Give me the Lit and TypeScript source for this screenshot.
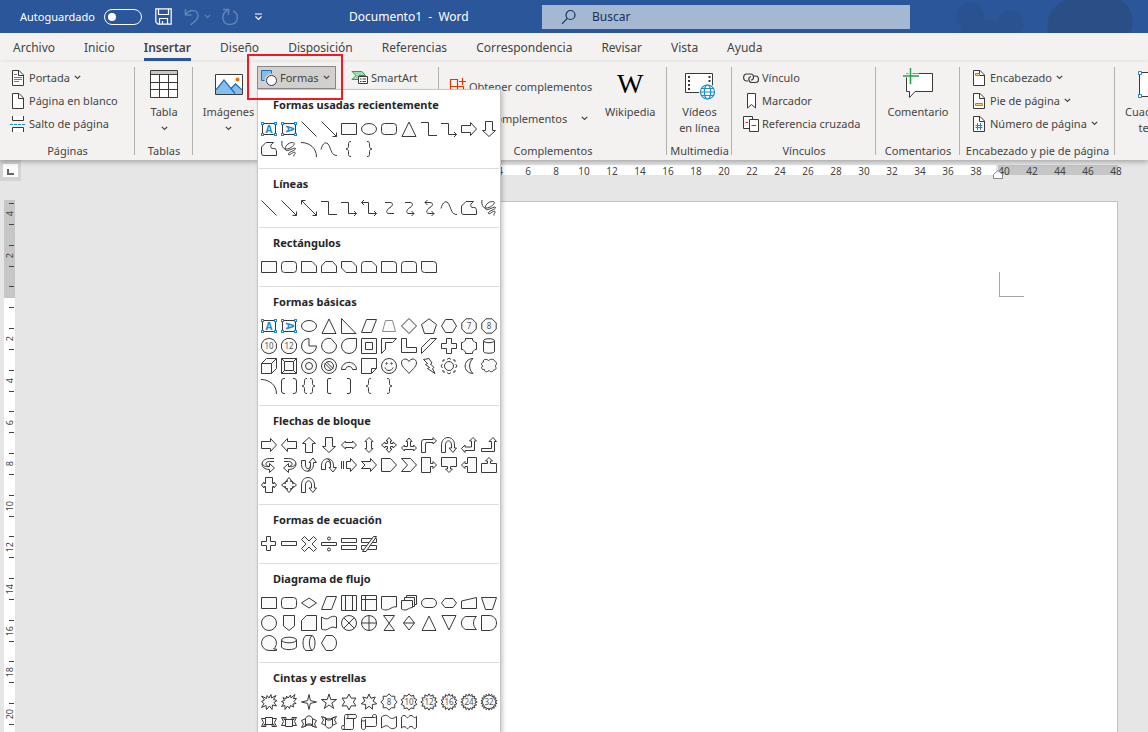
import { LitElement, html, svg, css, nothing } from "lit";
import type { SVGTemplateResult, TemplateResult } from "lit";
import { customElement, property } from "lit/decorators.js";

type Art = SVGTemplateResult;

/* ---------- geometry helpers, all on a 16 x 16 grid ---------- */

const p = (d: string): Art => svg`<path d=${d}></path>`;
const open = (d: string): Art => svg`<path d=${d} fill="none"></path>`;
const turn = (deg: number, art: Art): Art =>
  svg`<g transform=${`rotate(${deg} 8 8)`}>${art}</g>`;
const mirror = (art: Art): Art =>
  svg`<g transform="translate(16 0) scale(-1 1)">${art}</g>`;
const flip = (art: Art): Art =>
  svg`<g transform="translate(0 16) scale(1 -1)">${art}</g>`;

const ring = (n: number, r: number, inner = 0, start = -90): string => {
  const count = inner ? n * 2 : n;
  const pts: string[] = [];
  for (let i = 0; i < count; i++) {
    const a = ((start + (360 / count) * i) * Math.PI) / 180;
    const q = inner && i % 2 ? inner : r;
    pts.push(`${(8 + q * Math.cos(a)).toFixed(2)} ${(8 + q * Math.sin(a)).toFixed(2)}`);
  }
  return `M${pts.join("L")}z`;
};

const digits = (label: string): Art =>
  svg`<text class="num" x="8" y="11" text-anchor="middle">${label}</text>`;
const polygonNo = (n: number, label: string, start = -90): Art =>
  svg`${p(ring(n, 7.8, 0, start))}${digits(label)}`;
const starNo = (n: number, label: string, inner: number): Art =>
  svg`${p(ring(n, 8.2, inner))}${digits(label)}`;
const circle = (r: number): Art => svg`<circle cx="8" cy="8" r=${r}></circle>`;

/* ---------- shapes ---------- */

const corner = (x: number, y: number): Art =>
  svg`<rect class="handle" x=${x} y=${y} width="2" height="2"></rect>`;
const boxFrame = svg`${p("M1.5 2.5H14.5V13.5H1.5z")}${corner(0.5, 1.5)}${corner(13.5, 1.5)}${corner(0.5, 12.5)}${corner(13.5, 12.5)}`;
const letterA = svg`<text class="letter" x="8" y="11.5" text-anchor="middle">A</text>`;
const textBox = svg`${boxFrame}${letterA}`;
const textBoxV = svg`${boxFrame}${turn(90, letterA)}`;

const rect = p("M.5 2.5H15.5V13.5H.5z");
const roundRect = svg`<rect x=".5" y="2.5" width="15" height="11" rx="3"></rect>`;
const ellipse = svg`<ellipse cx="8" cy="8" rx="7.5" ry="5.5"></ellipse>`;
const triangle = p("M8 1L15 15.5H1z");
const line = open("M.5 .5L15.5 15.5");
const lineArrow = open("M.5 .5L15.5 15.5M15.5 11.5V15.5H11.5");
const lineBoth = open("M.5 .5L15.5 15.5M15.5 11.5V15.5H11.5M.5 4.5V.5H4.5");
const elbow = open("M0 1.5H7.5V14.5H16");
const elbowArrow = open("M0 2.5H7.5V13.5H15.5M13 11L15.5 13.5L13 16");
const elbowBoth = open("M.5 2.5H7.5V13.5H15.5M13 11L15.5 13.5L13 16M3 0L.5 2.5L3 5");
const curved = open("M4 2.5H9C12.5 2.5 12 6 9 7.5S4 13.5 8 13.5H13");
const curvedArrow = open("M4 2.5H9C12.5 2.5 12 6 9 7.5S4 13.5 8 13.5H13M10.5 11L13 13.5L10.5 16");
const curvedBoth = open("M4 2.5H9C12.5 2.5 12 6 9 7.5S4 13.5 8 13.5H13M10.5 11L13 13.5L10.5 16M6.5 0L4 2.5L6.5 5");
const freeform = p("M5 1.5H12.5C8.5 4 9 8 12.5 7.5C15 7 15.5 9 15.5 11V14.5H3C1 14.5.5 13.5.5 12V6z");
const scribble = open("M1 0C0 6 3 9.500 8 7.500C13 5.500 15 1.500 11.500 1.500C7 1.500 3 6 4.500 9C6 11.500 14 5.500 14.500 7.500C15 9.500 6.500 11 7.500 13.500C8.500 15 12.500 10 14 11.500C15 13 12 13.500 13 15.500");
const arc = open("M0 1.500C8.500 1.500 15.500 7 15.500 16");
const curve = open("M0 8.500C1.500 2 5.500 -.5 8 4.500S10.500 14.500 16 14.500");
const braceL = open("M10 .5C7.500 .5 7.500 1.500 7.500 4S7.500 7.500 5 8C7.500 8.500 7.500 9.500 7.500 12S7.500 15.500 10 15.500");
const braceR = mirror(braceL);

const arrowR = p("M.5 4.500H9.500V1.500L15.500 8L9.500 14.500V11.500H.5z");
const arrowL = turn(180, arrowR);
const arrowU = turn(-90, arrowR);
const arrowD = turn(90, arrowR);
const arrowLR = p("M.5 8L4.500 4V5.500H11.500V4L15.500 8L11.500 12V10.500H4.500V12z");

const cross = p("M5.500 .5H10.500V5.500H15.500V10.500H10.500V15.500H5.500V10.500H.5V5.500H5.500z");

const recent: Art[] = [
  textBox, textBoxV, line, lineArrow, rect, ellipse, roundRect, triangle, elbow, elbowArrow, arrowR, arrowD,
  freeform, scribble, arc, curve, braceL, braceR,
];

const lines: Art[] = [
  line, lineArrow, lineBoth, elbow, elbowArrow, elbowBoth, curved, curvedArrow, curvedBoth, curve, freeform, scribble,
];

const rects: Art[] = [
  rect,
  roundRect,
  p("M.5 2.500H11L15.500 7V13.500H.5z"),
  p("M4.500 2.500H11.500L15.500 7V13.500H.5V7z"),
  p("M.5 2.500H11L15.500 7V13.500H5L.5 9z"),
  p("M3.500 2.500H11L15.500 7V13.500H.5V5.500Q.5 2.500 3.500 2.500z"),
  p("M.5 2.500H12.500Q15.500 2.500 15.500 5.500V13.500H.5z"),
  p("M3.500 2.500H12.500Q15.500 2.500 15.500 5.500V13.500H.5V5.500Q.5 2.500 3.500 2.500z"),
  p("M.5 2.500H12.500Q15.500 2.500 15.500 5.500V13.500H3.500Q.5 13.500 .5 10.500z"),
];

const bracketL = open("M10 .5H8Q6.500 .5 6.500 2V14Q6.500 15.500 8 15.500H10");

const basic: Art[] = [
  textBox,
  textBoxV,
  ellipse,
  triangle,
  p("M.5 .5V15.500H15z"),
  p("M5.500 1.500H15.500L10.500 14.500H.5z"),
  svg`<g class="dim">${p("M4.500 2.500H11.500L14.500 13.500H1.500z")}</g>`,
  p("M8 .5L15.500 8L8 15.500L.5 8z"),
  p("M8 .8L15.500 6.500L12.500 15.500H3.500L.5 6.500z"),
  p("M4.500 1.500H11.500L15.500 8L11.500 14.500H4.500L.5 8z"),
  polygonNo(8, "7", -67.5),
  polygonNo(8, "8", -67.5),
  polygonNo(10, "10"),
  polygonNo(12, "12", -75),
  p("M8 .5V8H15.500A7.500 7.500 0 1 1 8 .5z"),
  p("M10 .5L15.500 7A7.500 7.500 0 1 1 10 .5z"),
  p("M15.500 .5H8A7.500 7.500 0 1 0 15.500 8z"),
  svg`${p("M.5 .5H15.500V15.500H.5z")}${p("M4.500 4.500H11.500V11.500H4.500z")}`,
  p("M.5 .5H15.500L11.500 4.500H4.500V11.500L.5 15.500z"),
  p("M.5 .5H5.500V9.500H15.500V14.500H.5z"),
  p("M9.500 .5H15.500L.5 15.500V9.500z"),
  cross,
  p("M4.500 .5H11.500V2L14 4.500H15.500V11.500H14L11.500 14V15.500H4.500V14L2 11.500H.5V4.500H2L4.500 2z"),
  svg`${p("M2.500 3V13.500C3 15.800 13 15.800 13.500 13.500V3")}<ellipse cx="8" cy="2.700" rx="5.500" ry="2"></ellipse>`,
  svg`${p("M.5 5.500L5.500 .5H15.500V10.500L10.500 15.500H.5z")}${open("M.5 5.500H10.500V15.500M10.500 5.500L15.500 .5")}`,
  svg`${p("M.5 .5H15.500V15.500H.5z")}${p("M3.500 3.500H12.500V12.500H3.500z")}${open("M.5 .5L3.500 3.500M15.500 .5L12.500 3.500M.5 15.500L3.500 12.500M15.500 15.500L12.500 12.500")}`,
  svg`${circle(7.5)}${circle(3.5)}`,
  svg`${circle(7.5)}${circle(4.5)}${open("M4 5.500L10.500 12M5.500 4L12 10.500")}`,
  p("M.5 11.500C1 2 15 2 15.500 11.500H11.500C11 7.500 5 7.500 4.500 11.500z"),
  svg`${p("M.5 .5H15.500V10.500L10.500 15.500H.5z")}${open("M10.500 15.500V10.500H15.500")}`,
  svg`${circle(7.5)}${open("M4 9.500C5 13.500 11 13.500 12 9.500")}<circle cx="5.500" cy="5.500" r=".7"></circle><circle cx="10.500" cy="5.500" r=".7"></circle>`,
  p("M8 3.500C9.500 0 15.500 0 15.500 5C15.500 9 10 12.500 8 15.500C6 12.500 .5 9 .5 5C.5 0 6.500 0 8 3.500z"),
  p("M2.500 1.500L8 .5L11 5L9.500 6L13 9.500L11.500 10.500L14 15.500L6.500 10.500L8.500 9.500L4.500 6.500L6.500 5.500z"),
  svg`${circle(4.5)}${open("M6 1.500L8 0L10 1.500M6 14.500L8 16L10 14.500M1.500 6L0 8L1.500 10M14.500 6L16 8L14.500 10M2 4V2H4M12 2H14V4M2 12V14H4M12 14H14V12")}`,
  p("M12 .5C1.500 1 1.500 15 12 15.500C7.500 12 7.500 4 12 .5z"),
  p("M2.500 4C1.500 1 5.500 .5 7.500 2.500C9.500 .5 13.500 1 13.500 3C16 3.500 16 7 14 8C16 10 15 12 12.500 12C12 14.500 9 14 8 12.500C6 14.500 3 14 3.500 11.500C.5 12 -.5 9 2 8C-.5 7 .5 4 2.500 4z"),
  arc,
  open("M4 .5H3Q.5 .5 .5 3V13Q.5 15.500 3 15.500H4M12 .5H13Q15.500 .5 15.500 3V13Q15.500 15.500 13 15.500H12"),
  svg`<g transform="translate(-4 0)">${braceL}</g><g transform="translate(3 0)">${braceR}</g>`,
  bracketL,
  mirror(bracketL),
  braceL,
  braceR,
];

const bentUp = p("M.5 11.500H10.500V4.500H8L12 .5L15.500 4.500H13.500V14.500H.5z");
const swoosh = svg`${p("M13 1.500H8.500C-1.500 1.500 -1.500 12.500 8.500 12.500V15.500L13.500 11L8.500 6.500V9.500C4 9.500 3.500 4.500 8.500 4.500H13")}${open("M1.500 6.500C2 9 4 10 8.500 9.500")}`;
const uTurn = p("M.5 15.500V8C.5 -2 13.500 -2 13.500 8V11H15.500L12 15.500L8 11H10.500V8C10.500 2.500 4.500 2.500 4.500 8V15.500z");
const arch = svg`${p("M.5 12.500V8.500C.5 -.5 12.500 -.5 12.500 8.500V10.500H15.500L12 15L8 10.500H9.500V8C9.500 3 4.500 3 4.500 8V12.500z")}${open("M6.500 2C9 2.500 9.500 5 9.500 8.500")}`;
const callout = p("M.5 .5H9.500V6.500H12V4.500L15.500 8L12 11.500V9.500H9.500V15.500H.5z");

const blockArrows: Art[] = [
  arrowR,
  arrowL,
  arrowU,
  arrowD,
  arrowLR,
  turn(90, arrowLR),
  p("M8 .5L11 4H9.500V6.500H12V5L15.500 8L12 11V9.500H9.500V12H11L8 15.500L5 12H6.500V9.500H4V11L.5 8L4 5V6.500H6.500V4H5z"),
  p("M8 1L11 4.500H9.500V9.500H12.500V8L15.500 11L12.500 14V12.500H3.500V14L.5 11L3.500 8V9.500H6.500V4.500H5z"),
  p("M.5 15.500V5Q.5 2.500 3 2.500H12V.5L15.500 4L12 7V5.500H6Q4.500 5.500 4.500 7V15.500z"),
  uTurn,
  p("M.5 11.500L4 8V10H10.500V4H8.500L12 .5L15.500 4H13.500V13.500H4V15.500z"),
  bentUp,
  swoosh,
  mirror(swoosh),
  flip(arch),
  arch,
  svg`${p("M5.500 4.500H9.500V1.500L15.500 8L9.500 14.500V11.500H5.500z")}${open("M.5 4V12M2.500 4V12")}`,
  p("M.5 4.500H9.500V1.500L15.500 8L9.500 14.500V11.500H.5L4 8z"),
  p("M.5 1.500H9.500L15.500 8L9.500 14.500H.5z"),
  p("M.5 1.500H9.500L15.500 8L9.500 14.500H.5L6.500 8z"),
  callout,
  turn(90, callout),
  turn(180, callout),
  turn(-90, callout),
  p("M4.500 .5H11.500V6.500H13V5L15.500 8L13 11V9.500H11.500V15.500H4.500V9.500H3V11L.5 8L3 5V6.500H4.500z"),
  p("M8 .5L10.500 3.500H9.500V4.500H11.500V6.500H12.500V5.500L15.500 8L12.500 10.500V9.500H11.500V11.500H9.500V12.500H10.500L8 15.500L5.500 12.500H6.500V11.500H4.500V9.500H3.500V10.500L.5 8L3.500 5.500V6.500H4.500V4.500H6.500V3.500H5.500z"),
  uTurn,
];

const twoBars = p("M.5 2.500H15.500V6.500H.5zM.5 9.500H15.500V13.500H.5z");

const equation: Art[] = [
  p("M5.500 .5H9.500V5.500H14.500V9.500H9.500V14.500H5.500V9.500H.5V5.500H5.500z"),
  p("M.5 5.500H15.500V9.500H.5z"),
  p("M3.500 .5L8 5L12.500 .5L15.500 3.500L11 8L15.500 12.500L12.500 15.500L8 11L3.500 15.500L.5 12.500L5 8L.5 3.500z"),
  svg`${p("M.5 6.500H15.500V9.500H.5z")}<circle cx="8" cy="2.500" r="1.500"></circle><circle cx="8" cy="13.500" r="1.500"></circle>`,
  twoBars,
  svg`${twoBars}${p("M12.500 .5H15.500L5 15.500H1.500z")}`,
];

const flow: Art[] = [
  rect,
  roundRect,
  p("M8 3L15.500 8L8 13L.5 8z"),
  p("M5.500 1.500H15.500L10.500 14.500H.5z"),
  svg`${p("M.5 .5H15.500V15.500H.5z")}${open("M4.500 .5V15.500M11.500 .5V15.500")}`,
  svg`${p("M.5 .5H15.500V15.500H.5z")}${open("M4.500 .5V15.500M.5 4.500H15.500")}`,
  p("M.5 1.500H15.500V12C11 11 9 15 5 15C3 15 1.500 14.500 .5 13.500z"),
  svg`${p("M5.500 .5H15.500V9.500H5.500z")}${p("M3.500 2.500H13.500V11.500H3.500z")}${p("M.5 5.500H11.500V12.500C8 12.500 7 15 4 15C2 15 1.500 14.500 .5 14z")}`,
  svg`<rect x=".5" y="3.500" width="15" height="9" rx="4.500"></rect>`,
  p("M4 3.500H12L15.500 8L12 12.500H4L.5 8z"),
  p("M.5 6L15.500 2.500V13.500H.5z"),
  p("M.5 2.500H15.500L11.500 14.500H4.500z"),
  circle(7.5),
  p("M2.500 .5H13.500V11L8 15.500L2.500 11z"),
  p("M.5 5.500L5.500 .5H15.500V15.500H.5z"),
  p("M.5 2C4 4 6 4.500 8 3S13 .5 15.500 2V13C12 11.500 10 12 8 13.500S3 15.500 .5 14z"),
  svg`${circle(7.5)}${open("M2.700 2.700L13.300 13.300M13.300 2.700L2.700 13.300")}`,
  svg`${circle(7.5)}${open("M8 .5V15.500M.5 8H15.500")}`,
  p("M2.500 .5H13.500L3 15.500H13.500z"),
  svg`${p("M8 1L13.500 8L8 15L2.500 8z")}${open("M2.500 8H13.500")}`,
  triangle,
  turn(180, triangle),
  p("M4.500 1.500H15.500C11.500 5 11.500 11 15.500 14.500H4.500C-1 12 -1 4 4.500 1.500z"),
  p("M.5 .5H8C18 .5 18 15.500 8 15.500H.5z"),
  svg`${p("M8 15.500A7.500 7.500 0 1 1 14 12.500L12.500 14H15.500V15.500z")}`,
  svg`${p("M.5 5V12C2 15.500 14 15.500 15.500 12V5")}<ellipse cx="8" cy="5" rx="7.500" ry="2.800"></ellipse>`,
  svg`${p("M5 .5H11C15 2 15 14 11 15.500H5C1 14 1 2 5 .5z")}${open("M11 .5C7.500 4 7.500 12 11 15.500")}`,
  p("M5 .5H11C17 3 17 13 11 15.500H5L.5 8z"),
];

const ribbon = svg`${p("M.5 4.500H5V12.500H.5L2.500 8.500zM15.500 4.500H11V12.500H15.500L13.500 8.500z")}${p("M4.500 3.500H11.500V10.500H4.500z")}${open("M3 12.500V10.500H13V12.500")}`;
const ribbonCurved = svg`${p("M.5 6.500L5 4.500V12L.5 13.500L2.500 10zM15.500 6.500L11 4.500V12L15.500 13.500L13.500 10z")}${p("M4.500 4.500C6 1 10 1 11.500 4.500V11C10 9.500 6 9.500 4.500 11z")}${open("M2.500 13C5 10.500 11 10.500 13.500 13")}`;
const scrollV = svg`${p("M3.500 2.500C3.500 .5 4.500 .5 5.500 .5H14C16 .5 16 4.500 14 4.500H12.500V13.500C12.500 15.500 11.500 15.500 10.500 15.500H2C0 15.500 0 11.500 2 11.500H3.500z")}${open("M5.500 .5C7.500 .5 7.500 4.500 5.500 4.500H12.500M2 11.500C4 11.500 4 15.500 2 15.500")}`;
const scrollH = svg`${p("M.5 5.500C.5 3.500 1.500 3.500 2.500 3.500H11.500V2C11.500 0 15.500 0 15.500 2V10.500C15.500 12.500 14.500 12.500 13.500 12.500H4.500V14C4.500 16 .5 16 .5 14z")}${open("M.5 5.500C.5 7.500 4.500 7.500 4.500 5.500V12.500M11.500 3.500H13.500C15.500 3.500 15.500 2.500 15.500 2")}`;

const banners: Art[] = [
  p("M8 4L10 .5L10.500 4L15 1.500L12.500 5.500L16 6.500L13 8.500L15.500 12L11.500 11L11 15.500L8.500 12L5.500 15.500L5 11.500L.5 13.500L3 9.500L.5 7.500L3.500 6L.5 2L5.500 4.500L6 1.500z"),
  p("M7 4L9.500 1L10 4L14 .5L12.500 4.500L15.500 4.500L13 7.500L15 9.500L12 10L12.500 13L9.500 11.500L8.500 14.500L6.500 12L4 15.500L4 11.500L.5 12.500L3 9L.5 7.500L3.500 6.500L2 3.500L5 5L5.500 2z"),
  p(ring(4, 7.5, 2)),
  p(ring(5, 8, 3)),
  p(ring(6, 8, 4.4)),
  p(ring(7, 8, 4.2)),
  starNo(8, "8", 6.2),
  starNo(10, "10", 6.2),
  starNo(12, "12", 6),
  starNo(14, "16", 6),
  starNo(16, "24", 6),
  starNo(18, "32", 6),
  ribbon,
  flip(ribbon),
  ribbonCurved,
  flip(ribbonCurved),
  scrollV,
  scrollH,
  p("M.5 3C4 .5 6 1 8 3S12 5 15.500 2.500V13C12 15.500 10 15 8 13S4 11.500 .5 14z"),
  p("M.5 3C2 1 4 1 5 2.500S7 4 8 2.500S11 1 12 2.500S14 4 15.500 2.500V13.500C14 15 13 15 12 13.500S9 12 8 13.500S6 15 5 13.500S2 12.500 .5 14z"),
];

interface Section {
  title: string;
  shapes: Art[];
}

const sections: Section[] = [
  { title: "Formas usadas recientemente", shapes: recent },
  { title: "Líneas", shapes: lines },
  { title: "Rectángulos", shapes: rects },
  { title: "Formas básicas", shapes: basic },
  { title: "Flechas de bloque", shapes: blockArrows },
  { title: "Formas de ecuación", shapes: equation },
  { title: "Diagrama de flujo", shapes: flow },
  { title: "Cintas y estrellas", shapes: banners },
];

/* ---------- gallery menu ---------- */

@customElement("shape-gallery")
export class ShapeGallery extends LitElement {
  static styles = css`
    :host {
      display: block;
      box-sizing: border-box;
      padding: 0 1px;
      background: #fff;
      border: 1px solid #c6c6c6;
      box-shadow: 2px 2px 4px rgba(0, 0, 0, 0.2);
    }
    section {
      padding-bottom: 9px;
      border-bottom: 1px solid #dcdcdc;
    }
    h2 {
      margin: 0;
      padding-left: 14px;
      font-size: 11px;
      font-weight: 700;
      line-height: 29px;
      color: #262626;
    }
    .grid {
      display: grid;
      grid-template-columns: repeat(12, 20px);
      grid-auto-rows: 20px;
    }
    button {
      display: grid;
      place-items: center;
      padding: 0;
      border: 0;
      background: none;
    }
    svg {
      display: block;
      width: 16px;
      height: 16px;
      overflow: visible;
      stroke: #3b3a39;
      stroke-width: 1;
      fill: #fafafa;
    }
    .dim {
      stroke: #8a8a8a;
    }
    .handle {
      stroke: #1e8bcd;
      fill: #fff;
    }
    .letter {
      font: 700 10px "Noto Sans", sans-serif;
      stroke: none;
      fill: #1e8bcd;
    }
    .num {
      font: 8px "Noto Sans", sans-serif;
      stroke: none;
      fill: #555;
    }
  `;

  render() {
    return sections.map(
      (s) => html`<section>
        <h2>${s.title}</h2>
        <div class="grid">
          ${s.shapes.map(
            (shape, i) => html`<button type="button" aria-label=${`${s.title} ${i + 1}`}>
              <svg viewBox="0 0 16 16" aria-hidden="true">${shape}</svg>
            </button>`,
          )}
        </div>
      </section>`,
    );
  }
}

/* ---------- ribbon icons ---------- */

const icon = (w: number, h: number, art: Art): TemplateResult =>
  html`<svg class="icon" width=${w} height=${h} viewBox=${`0 0 ${w} ${h}`} aria-hidden="true">${art}</svg>`;

const chevron = html`<svg class="chev" width="7" height="5" viewBox="0 0 7 5" aria-hidden="true">
  <path d="M.8 .8L3.500 3.500L6.200 .8" fill="none" stroke="currentColor" stroke-width="1.200"></path>
</svg>`;

const sheet = svg`<path d="M3.500 1.500H10L14.500 6V16.500H3.500z" fill="#fff" stroke="#3b3a39"></path><path d="M9.500 1.500V6.500H14.500" fill="none" stroke="#3b3a39"></path>`;

const icons = {
  cover: icon(18, 18, svg`${sheet}<path d="M5 5.500H8M5 8.500H13M5 10.500H13M5 12.500H10" stroke="#797775"></path>`),
  blank: icon(18, 18, sheet),
  pageBreak: icon(18, 18, svg`<path d="M3.500 1V5.500H14.500V1M3.500 17V12.500H14.500V17" fill="#fff" stroke="#3b3a39"></path><path d="M1 9.500H17" stroke="#1e8bcd" stroke-dasharray="3 1"></path>`),
  table: icon(32, 32, svg`<path d="M2.500 2.500H29.500V29.500H2.500z" fill="#fff" stroke="#3b3a39"></path><path d="M3 3H29V6H3z" fill="#c8c6c4"></path><path d="M2.500 6.500H29.500M2.500 14.500H29.500M2.500 21.500H29.500M11.500 6.500V29.500M20.500 6.500V29.500" stroke="#3b3a39"></path>`),
  images: icon(32, 32, svg`<path d="M2.500 6.500H29.500V26.500H2.500z" fill="#fff" stroke="#3b3a39"></path><path d="M3 23L11 13L22 26H3z M17 21L22.500 16.500L29 23V26H20z" fill="#83beec"></path><path d="M3 22L11 12L22 25.500M18 20.500L22.500 16L29 22" fill="none" stroke="#1e6fb8" stroke-width="1.300"></path><circle cx="24.500" cy="11.500" r="2" fill="#e8710a"></circle>`),
  shapes: icon(18, 18, svg`<path d="M1.500 1.500H11.500V11.500H1.500z" fill="#83beec" stroke="#1e6fb8"></path><circle cx="11.500" cy="11.500" r="7" fill="#d2d0ce" stroke="none"></circle><circle cx="11.500" cy="11.500" r="5" fill="#fff" stroke="#3b3a39"></circle>`),
  smart: icon(18, 18, svg`<path d="M1 2.500H11L14.500 6.500H8V10.500H1L5 6.500z" fill="#9fdbb0" stroke="#2e9e4f"></path><path d="M7.500 7.500H16.500V14.500H7.500z" fill="#fff" stroke="#3b3a39"></path><path d="M9 10H10.500M9 12.500H10.500M11.500 10H15M11.500 12.500H15" stroke="#3b3a39"></path>`),
  store: icon(18, 18, svg`<path d="M1.500 1.500H8.500V15.500H1.500zM1.500 8.500H14.500V15.500H1.500z M13.500 0V7M10 3.500H17" fill="none" stroke="#d83b01" stroke-width="1.200"></path>`),
  addin: icon(18, 18, svg`<path d="M2.500 5.500L9 2L15.500 5.500V12.500L9 16L2.500 12.500z" fill="#fff" stroke="#d83b01"></path>`),
  video: icon(32, 32, svg`<path d="M1.500 5.500H28.500V24.500H1.500z" fill="#fff" stroke="#3b3a39"></path><path d="M5 8V23M25.500 8V23" stroke="#3b3a39" stroke-width="2" stroke-dasharray="2 2"></path><circle cx="23.500" cy="24" r="8.500" fill="#f3f2f1"></circle><g fill="#fff" stroke="#1e8bcd" stroke-width="1.200"><circle cx="23.500" cy="24" r="7"></circle><ellipse cx="23.500" cy="24" rx="3.200" ry="7"></ellipse><path d="M16.500 24H30.500M17.500 20.500H29.500M17.500 27.500H29.500"></path></g>`),
  link: icon(18, 18, svg`<g fill="none" stroke="#3b3a39" stroke-width="1.200"><path d="M6 12H5C.5 12 .5 5 5 5H8.500C12.500 5 12.500 11 9 11"></path><path d="M12 7H13.500C17.500 7 17.500 13.500 13.500 13.500H10C6 13.500 6 8 9 7.500"></path></g>`),
  bookmark: icon(18, 18, svg`<path d="M5.500 1.500H13.500V16L9.500 12.500L5.500 16z" fill="#fff" stroke="#3b3a39"></path>`),
  crossRef: icon(18, 18, svg`<path d="M1.500 1.500H10.500V13.500H1.500z" fill="#fff" stroke="#3b3a39"></path><path d="M7.500 4.500H16.500V16.500H7.500z" fill="#fff" stroke="#3b3a39"></path><path d="M3.500 7.500H6M9.500 10.500H14" stroke="#e8112d"></path>`),
  comment: icon(32, 32, svg`<path d="M4.500 5.500H30.500V23.500H13L7.500 29.500V23.500H4.500z" fill="#fff" stroke="#3b3a39"></path><path d="M8.500 2V17M1 7.500H17" stroke="#f3f2f1" stroke-width="4"></path><path d="M8.500 0V16M1 8H17" stroke="#2e9e4f" stroke-width="1.500"></path>`),
  header: icon(18, 18, svg`${sheet}<path d="M5.500 4.500H9.500V6.500H5.500z" fill="#fbd38a" stroke="#e07000"></path>`),
  footer: icon(18, 18, svg`${sheet}<path d="M5.500 11.500H12.500V13.500H5.500z" fill="#fbd38a" stroke="#e07000"></path>`),
  pageNo: icon(18, 18, svg`${sheet}<path d="M7.500 8V15M10.500 8V15M5.500 10.500H12.500M5.500 12.500H12.500" stroke="#1e8bcd" fill="none"></path>`),
  textBox: icon(32, 32, svg`<path d="M3.500 4.500H31V28.500H3.500z" fill="#fff" stroke="#3b3a39"></path><path d="M2.500 3.500H5.500V6.500H2.500zM2.500 26.500H5.500V29.500H2.500z" fill="#fff" stroke="#1e8bcd"></path><path d="M13 23L18 10L23 23M15 19H21" fill="none" stroke="#1e8bcd" stroke-width="2"></path>`),
};

const tabs = ["Archivo", "Inicio", "Insertar", "Diseño", "Disposición", "Referencias", "Correspondencia", "Revisar", "Vista", "Ayuda"];
const horizontal = Array.from({ length: 25 }, (_, i) => i * 2);
const vertical = [4, 2, 0, 2, 4, 6, 8, 10, 12, 14, 16, 18, 20];

const small = (art: TemplateResult, label: string, drop = false) =>
  html`<button type="button" class="small">${art}<span>${label}</span>${drop ? chevron : nothing}</button>`;
const big = (art: TemplateResult, label: string, second: unknown = nothing) =>
  html`<button type="button" class="big">${art}<span>${label}</span><span class="second">${second}</span></button>`;

/* ---------- page ---------- */

@customElement("app-root")
export class AppRoot extends LitElement {
  @property() active = "Insertar";

  static styles = css`
    :host {
      display: flex;
      flex-direction: column;
      height: 100vh;
      overflow: hidden;
      position: relative;
      background: #e6e6e6;
      color: #444;
      font: 11px/16px "Noto Sans", "Open Sans", sans-serif;
    }
    * {
      box-sizing: border-box;
    }
    button,
    input {
      font: inherit;
      color: inherit;
      border: 0;
      padding: 0;
      margin: 0;
      background: none;
    }
    svg {
      display: block;
      flex: none;
    }

    .titlebar {
      position: relative;
      flex: none;
      display: flex;
      align-items: center;
      height: 33px;
      padding-left: 20px;
      background: #2b579a;
      color: #fff;
      font-size: 12px;
    }
    .art {
      position: absolute;
      right: 0;
      top: 0;
    }
    .autosave {
      display: flex;
      align-items: center;
      justify-content: space-between;
      width: 122px;
      margin-right: 13px;
      font-size: 11px;
    }
    .switch {
      appearance: none;
      display: flex;
      align-items: center;
      width: 38px;
      height: 16px;
      padding: 0 3px;
      border: 1px solid #fff;
      border-radius: 8px;
    }
    .switch::before {
      content: "";
      width: 8px;
      height: 8px;
      border-radius: 50%;
      background: #fff;
    }
    .quick {
      display: flex;
      align-items: center;
      width: 194px;
    }
    .quick button:nth-child(1) {
      margin-right: 12px;
    }
    .quick button:nth-child(3) {
      margin: 0 10px 0 3px;
    }
    .quick button:nth-child(5) {
      margin-left: 15px;
    }
    .faded {
      color: #5f83b8;
    }
    .doc {
      width: 193px;
      white-space: pre;
    }
    .search {
      display: flex;
      align-items: center;
      gap: 15px;
      width: 368px;
      height: 24px;
      padding-left: 19px;
      background: #a5b8d1;
      color: #16305e;
    }
    .search input {
      flex: 1;
      min-width: 0;
      outline: 0;
    }
    .search input::placeholder {
      color: #16305e;
      opacity: 1;
    }

    .tabs {
      flex: none;
      display: flex;
      gap: 29px;
      height: 29px;
      padding-left: 13px;
      background: #f3f2f1;
      font-size: 12px;
    }
    .tabs button {
      padding-top: 4px;
      border-bottom: 3px solid transparent;
      height: 28px;
    }
    .tabs .active {
      font-weight: 600;
      border-color: #2b579a;
    }

    .ribbon {
      flex: none;
      display: grid;
      grid-template-columns: 135px 58px 246px 228px 65px 144px 84px 155px auto;
      height: 98px;
      background: #f3f2f1;
      box-shadow: 0 2px 5px rgba(0, 0, 0, 0.28);
      white-space: nowrap;
      position: relative;
      z-index: 1;
    }
    .group {
      display: flex;
      flex-direction: column;
      position: relative;
      padding-top: 4px;
    }
    .group::after {
      content: "";
      position: absolute;
      right: 0;
      top: 5px;
      width: 1px;
      height: 88px;
      background: #b3b1af;
    }
    .group:last-child {
      overflow: hidden;
    }
    .group:last-child::after {
      content: none;
    }
    .items {
      display: flex;
      height: 77px;
    }
    .center {
      justify-content: center;
    }
    .caption {
      text-align: center;
    }
    .stack {
      display: flex;
      flex-direction: column;
      align-items: flex-start;
      padding-left: 9px;
    }
    .wide {
      padding-left: 10px;
    }
    .small {
      display: flex;
      align-items: center;
      gap: 2px;
      height: 23px;
    }
    .small .chev {
      margin-left: 2px;
    }
    .big {
      display: flex;
      flex-direction: column;
      align-items: center;
      justify-content: flex-start;
      padding-top: 2px;
      height: 77px;
    }
    .big > svg {
      margin-bottom: 4px;
    }
    .second {
      display: grid;
      place-items: center;
      min-height: 16px;
    }
    .illustrations {
      padding-left: 10px;
    }
    .illustrations > .big {
      width: 51px;
    }
    .shapes {
      position: relative;
      z-index: 2;
      margin-left: 3px;
      width: 79px;
    }
    .shapes > button {
      width: 100%;
      padding-left: 2px;
      background: #d2d0ce;
      border: 1px solid #8a8886;
    }
    .menu {
      position: absolute;
      left: 0;
      top: 23px;
      width: 244px;
    }
    .smart {
      margin-left: 15px;
    }
    .mark {
      position: absolute;
      left: -10px;
      top: -12px;
      width: 96px;
      height: 46px;
      border: 2px solid #ed1c24;
      pointer-events: none;
    }
    .addins {
      display: flex;
      flex-direction: column;
      gap: 9px;
      padding: 9px 0 0 10px;
      width: 166px;
    }
    .addins .small .chev {
      margin-left: 12px;
    }
    .wiki {
      height: 32px;
      margin-bottom: 4px;
      font: 28px/32px "Liberation Serif", serif;
      color: #000;
    }

    .desk {
      flex: 1;
      min-height: 0;
      display: flex;
      justify-content: space-between;
      overflow: hidden;
    }
    .left {
      display: flex;
      flex-direction: column;
      gap: 19px;
      width: 21px;
    }
    .tabstop {
      display: grid;
      place-items: center;
      width: 21px;
      height: 21px;
      background: #d4d4d4;
    }
    .tabstop svg {
      background: #fdfdfd;
    }
    .vruler {
      width: 11px;
      margin-left: 4px;
      flex: 1;
      overflow: hidden;
      background: linear-gradient(#c6c6c6 98px, #fff 98px);
    }
    .vcells {
      display: grid;
      grid-template-rows: repeat(13, 1fr);
      align-items: center;
      height: 542px;
      margin-top: -7px;
    }
    .vcell {
      display: grid;
      place-items: center;
      height: 22px;
      font-size: 9px;
      line-height: 11px;
      background:
        linear-gradient(#444, #444) 5px 0 / 5px 1px no-repeat,
        linear-gradient(#444, #444) 5px 100% / 5px 1px no-repeat;
    }
    .vcell span {
      writing-mode: vertical-rl;
      transform: rotate(180deg);
    }
    .right {
      display: flex;
      flex-direction: column;
      gap: 26px;
      width: 793px;
      margin-right: 30px;
      padding-top: 5px;
    }
    .hruler {
      position: relative;
      flex: none;
      display: flex;
      height: 10px;
      padding-left: 105px;
      font-size: 10px;
      line-height: 12px;
      background: linear-gradient(90deg, #c6c6c6 120px, #fff 120px, #fff 671px, #e6e6e6 671px, #e6e6e6 673px, #c6c6c6 673px);
    }
    .hruler span {
      flex: none;
      width: 28px;
      text-align: center;
    }
    .indent {
      position: absolute;
      left: 668px;
      top: 5px;
    }
    .sheet {
      flex: 1;
      display: flex;
      justify-content: flex-end;
      padding: 70px 93px 0 0;
      background: #fff;
      border: 1px solid #c2c2c2;
      border-bottom: 0;
    }
    .cropmark {
      width: 25px;
      height: 25px;
      border: solid #a6a6a6;
      border-width: 0 0 1px 1px;
    }
  `;

  render() {
    return html`
      <header class="titlebar">
        <svg class="art" width="320" height="33" viewBox="0 0 320 33" aria-hidden="true">
          <g fill="#2a5290">
            <circle cx="142" cy="17" r="14"></circle>
            <circle cx="182" cy="24" r="13"></circle>
            <path d="M130 33L145 20H192V33z"></path>
          </g>
          <path d="M220 33C216 12 232 0 240 0H292C304 6 308 22 302 33z" fill="#2a4f87"></path>
        </svg>
        <label class="autosave">Autoguardado<input class="switch" type="checkbox" role="switch" /></label>
        <div class="quick">
          <button type="button" aria-label="Guardar">
            <svg width="17" height="17" viewBox="0 0 17 17" fill="none" stroke="currentColor" stroke-width="1.200">
              <path d="M.8 .8H16.200V16.200H3L.8 14zM3.500 .8V6.500H13.500V.8M4.500 16V10.500H12.500V16M7.500 13V16"></path>
            </svg>
          </button>
          <button type="button" class="faded" aria-label="Deshacer">
            <svg width="17" height="18" viewBox="0 0 17 18" fill="none" stroke="currentColor" stroke-width="1.500">
              <path d="M1.500 1V7H7.500M1.500 7C5 1 14 1 14 8C14 12 10 14 6.500 17"></path>
            </svg>
          </button>
          <button type="button" class="faded" aria-label="Opciones de deshacer">${chevron}</button>
          <button type="button" class="faded" aria-label="Rehacer">
            <svg width="18" height="18" viewBox="0 0 18 18" fill="none" stroke="currentColor" stroke-width="1.500">
              <path d="M2 1.500H7.500V7M7 2C-1 6 1 16.500 9 16.500C17 16.500 19 6 12 3"></path>
            </svg>
          </button>
          <button type="button" aria-label="Personalizar barra">
            <svg width="9" height="8" viewBox="0 0 9 8" fill="none" stroke="currentColor" stroke-width="1.200">
              <path d="M1 1H8M1.500 3.500L4.500 6.500L7.500 3.500"></path>
            </svg>
          </button>
        </div>
        <div class="doc">Documento1  -  Word</div>
        <label class="search">
          <svg width="16" height="16" viewBox="0 0 16 16" fill="none" stroke="currentColor" stroke-width="1.200" aria-hidden="true">
            <circle cx="9.500" cy="6" r="4.500"></circle>
            <path d="M6.300 9.300L1 14.800"></path>
          </svg>
          <input type="search" placeholder="Buscar" aria-label="Buscar" />
        </label>
      </header>

      <nav class="tabs">
        ${tabs.map((t) => html`<button type="button" class=${t === this.active ? "active" : ""}>${t}</button>`)}
      </nav>

      <div class="ribbon">
        <div class="group">
          <div class="items">
            <div class="stack">
              ${small(icons.cover, "Portada", true)} ${small(icons.blank, "Página en blanco")}
              ${small(icons.pageBreak, "Salto de página")}
            </div>
          </div>
          <div class="caption">Páginas</div>
        </div>
        <div class="group">
          <div class="items center">${big(icons.table, "Tabla", chevron)}</div>
          <div class="caption">Tablas</div>
        </div>
        <div class="group">
          <div class="items illustrations">
            ${big(icons.images, "Imágenes", chevron)}
            <div class="shapes">
              <button type="button" class="small" aria-expanded="true">
                ${icons.shapes}<span>Formas</span>${chevron}
              </button>
              <shape-gallery class="menu"></shape-gallery>
              <div class="mark"></div>
            </div>
            <div class="smart">${small(icons.smart, "SmartArt")}</div>
          </div>
        </div>
        <div class="group">
          <div class="items">
            <div class="addins">
              ${small(icons.store, "Obtener complementos")} ${small(icons.addin, "Mis complementos", true)}
            </div>
            <button type="button" class="big"><span class="wiki">W</span><span>Wikipedia</span></button>
          </div>
          <div class="caption">Complementos</div>
        </div>
        <div class="group">
          <div class="items center">${big(icons.video, "Vídeos", "en línea")}</div>
          <div class="caption">Multimedia</div>
        </div>
        <div class="group">
          <div class="items">
            <div class="stack wide">
              ${small(icons.link, "Vínculo")} ${small(icons.bookmark, "Marcador")}
              ${small(icons.crossRef, "Referencia cruzada")}
            </div>
          </div>
          <div class="caption">Vínculos</div>
        </div>
        <div class="group">
          <div class="items center">${big(icons.comment, "Comentario")}</div>
          <div class="caption">Comentarios</div>
        </div>
        <div class="group">
          <div class="items">
            <div class="stack wide">
              ${small(icons.header, "Encabezado", true)} ${small(icons.footer, "Pie de página", true)}
              ${small(icons.pageNo, "Número de página", true)}
            </div>
          </div>
          <div class="caption">Encabezado y pie de página</div>
        </div>
        <div class="group">
          <div class="items stack wide">${big(icons.textBox, "Cuadro de", "texto")}</div>
        </div>
      </div>

      <main class="desk">
        <div class="left">
          <div class="tabstop">
            <svg width="15" height="13" viewBox="0 0 15 13" aria-hidden="true">
              <path d="M5 5V10H11" fill="none" stroke="#666" stroke-width="2"></path>
            </svg>
          </div>
          <div class="vruler">
            <div class="vcells">
              ${vertical.map((n) => html`<div class="vcell"><span>${n || nothing}</span></div>`)}
            </div>
          </div>
        </div>
        <div class="right">
          <div class="hruler">
            ${horizontal.map((n) => html`<span>${n || nothing}</span>`)}
            <svg class="indent" width="10" height="9" viewBox="0 0 10 9" aria-hidden="true">
              <path d="M.5 8.500V4.500L5 .5L9.500 4.500V8.500z" fill="#fff" stroke="#888"></path>
            </svg>
          </div>
          <div class="sheet"><div class="cropmark"></div></div>
        </div>
      </main>
    `;
  }
}
